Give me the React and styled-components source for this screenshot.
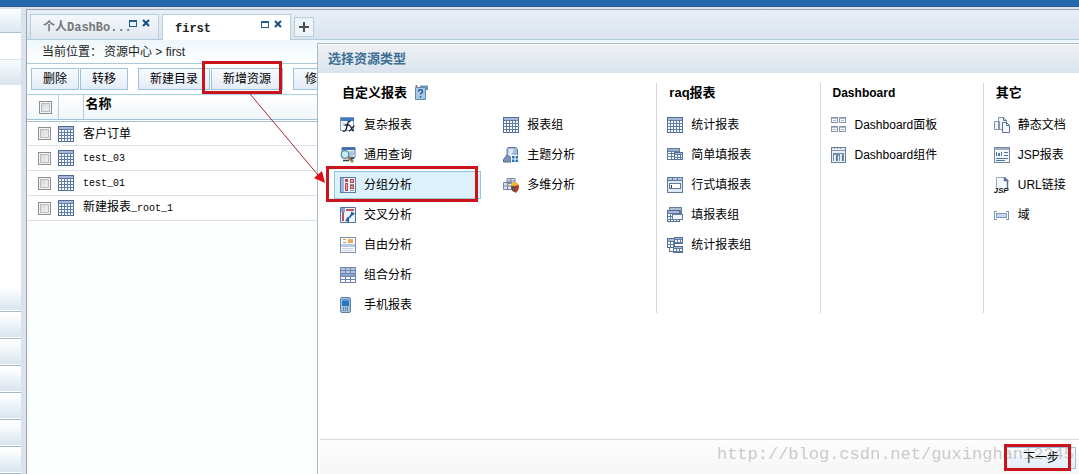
import { useState } from 'react';
import styled, { createGlobalStyle, css } from 'styled-components';

const GlobalStyle = createGlobalStyle`
  * {
    box-sizing: border-box;
  }

  body {
    margin: 0;
    overflow: hidden;
    background: #dae3ed;
    color: #000;
    font-family: 'Liberation Sans', Arial, 'Noto Sans CJK SC', sans-serif;
    font-size: 12px;
    line-height: 16px;
  }

  button {
    font: inherit;
    color: inherit;
    cursor: pointer;
  }
`;

const Page = styled.div`
  position: relative;
  display: flex;
  flex-direction: column;
  height: 100vh;
  overflow: hidden;
`;

const TopBar = styled.header`
  flex: none;
  height: 7px;
  background: #2567ad;
  border-bottom: 1px solid #2b5d97;
`;

const Shell = styled.div`
  flex: 1;
  display: flex;
  gap: 5px;
  min-height: 0;
  padding-top: 2px;
`;

const Sidebar = styled.aside`
  flex: none;
  display: flex;
  flex-direction: column;
  width: 21px;
  background: #fff;
`;

const SideTitle = styled.div`
  height: 24px;
  border-bottom: 1px solid #a4c3d6;
  background: linear-gradient(#fbfdfe, #dde8f0);
`;

const SideSearch = styled.div`
  height: 27px;
  border-bottom: 1px solid #dbe2e8;
`;

const SideGroup = styled.div`
  height: 25px;
  background: linear-gradient(#f8fbfd, #dae5ee);
`;

const SideSpace = styled.div`
  flex: 1;
`;

const SideItem = styled.div`
  flex: none;
  height: 27px;
  border-bottom: 1px solid #a2bccb;
  background: linear-gradient(#fff 10%, #e8f0f6 60%, #d9e3ed);
  box-shadow: inset 0 -1px #fff;
`;

const Main = styled.main`
  flex: 1;
  display: flex;
  flex-direction: column;
  min-width: 0;
  border-top: 1px solid #9fa6b0;
  border-left: 1px solid #9fa6b0;
  background: #fcfefe;
`;

const TabStrip = styled.div`
  flex: none;
  display: flex;
  align-items: flex-end;
  gap: 3px;
  height: 30px;
  padding: 0 3px;
  border-bottom: 1px solid #b1cbd8;
  background: linear-gradient(#e9eef5, #dae4ee);
`;

const Tab = styled.div`
  display: flex;
  align-items: center;
  justify-content: space-between;
  width: 129px;
  height: 25px;
  padding: 2px 8px 0 12px;
  border: 1px solid #b5cfe0;
  border-bottom: none;
  background: linear-gradient(#f5f8fb, #dfe8f1);
  color: #777;
  font-family: 'Liberation Mono', 'Noto Sans CJK SC', monospace;
  font-weight: bold;
  white-space: nowrap;

  ${({ $active }) =>
    $active &&
    css`
      height: 26px;
      margin-bottom: -1px;
      background: #fff;
      color: #222;
    `}
`;

const TabTools = styled.span`
  display: flex;
  gap: 5px;
  margin-left: -4px;
  padding-bottom: 10px;
`;

const IconButton = styled.button`
  display: flex;
  padding: 0;
  border: none;
  background: none;
`;

const AddTab = styled.button`
  display: flex;
  align-items: center;
  justify-content: center;
  width: 20px;
  height: 20px;
  margin-bottom: 2px;
  padding: 0;
  border: 1px solid #b5cfe0;
  background: #eef3f8;
`;

const Breadcrumb = styled.nav`
  flex: none;
  display: flex;
  align-items: center;
  gap: 2px;
  height: 24px;
  padding-left: 15px;
  border-bottom: 1px solid #a9c8dd;
  background: linear-gradient(#eef7fc, #fff);
  color: #222;
`;

const Toolbar = styled.div`
  flex: none;
  display: flex;
  align-items: center;
  gap: 10px;
  height: 30px;
  padding: 0 4px;
  background: #fff;
`;

const ButtonGroup = styled.div`
  display: flex;
  gap: 1px;
`;

const Button = styled.button`
  height: 22px;
  padding: 0 11px;
  border: 1px solid #9cc3de;
  background: linear-gradient(#f8fbfe, #e3ecf7);
  line-height: 20px;
  white-space: nowrap;
`;

const Table = styled.table`
  width: 100%;
  border-collapse: collapse;
  background: #fff;
`;

const HeadCell = styled.th`
  height: 26px;
  padding: 0 0 6px 2px;
  border: 1px solid #b0cfe2;
  border-bottom: 3px double #9fc1d9;
  border-left-width: ${({ $first }) => ($first ? 0 : '1px')};
  background: linear-gradient(#fff, #eff6f9);
  font-size: 13px;
  text-align: left;
`;

const CheckHead = styled(HeadCell)`
  width: 31px;
  padding: 0 0 0 12px;
`;

const IconHead = styled(HeadCell)`
  width: 25px;
`;

const Cell = styled.td`
  height: 25px;
  padding: 0;
  border-bottom: 1px solid #dce1e5;

  svg,
  input {
    display: block;
  }
`;

const CheckCell = styled(Cell)`
  padding-left: 11px;
`;

const Latin = styled.span`
  font-family: 'Liberation Mono', monospace;
  font-size: 10px;
`;

const Checkbox = styled.input.attrs({ type: 'checkbox' })`
  display: block;
  appearance: none;
  width: 13px;
  height: 13px;
  margin: 0;
  border: 1px solid #8e8f8f;
  background: linear-gradient(135deg, #cdd1d6, #f8f8f8);
  box-shadow: inset 0 0 0 1px #f4f4f4, inset 0 0 0 2px #b9bdc2;

  &:checked {
    background: #4a79ad;
  }
`;

const Dialog = styled.section`
  position: absolute;
  top: 43px;
  right: 0;
  bottom: 0;
  left: 317px;
  display: flex;
  flex-direction: column;
  border-top: 1px solid #a9bfd0;
  border-left: 1px solid #a9b9c9;
  background: #fff;
`;

const DialogTitle = styled.h2`
  flex: none;
  margin: 1px 0 0;
  padding: 6px 10px;
  background: linear-gradient(#edf0f3, #dae4ee);
  color: #3c6e95;
  font-size: 13px;
  line-height: 16px;
`;

const DialogBody = styled.div`
  flex: 1;
  display: grid;
  grid-template-columns: 2fr 1fr 1fr minmax(96px, 0.59fr);
  align-items: start;
  min-height: 0;
  padding: 10px 0 0 12px;
`;

const Column = styled.section`
  height: 230px;
  padding-left: 4px;

  & + & {
    border-left: 1px solid #d3d8dc;
  }
`;

const ColumnTitle = styled.h3`
  display: flex;
  align-items: center;
  gap: 8px;
  height: 20px;
  margin: 0 0 8px;
  padding-left: 8px;
  font-size: ${({ $latin }) => ($latin ? 12 : 13)}px;
  white-space: nowrap;
`;

const Lists = styled.div`
  display: grid;
  grid-template-columns: repeat(${({ $count }) => $count}, 1fr);
  gap: 4px;
`;

const List = styled.ul`
  display: flex;
  flex-direction: column;
  gap: 2px;
  margin: 0;
  padding: 0;
  list-style: none;
`;

const Option = styled.button`
  display: flex;
  align-items: center;
  gap: 8px;
  width: 100%;
  max-width: 147px;
  height: 28px;
  padding: 0 5px;
  border: 1px solid ${({ $selected }) => ($selected ? '#9cc3d8' : 'transparent')};
  background: ${({ $selected }) => ($selected ? '#dbf1fc' : 'none')};
  white-space: nowrap;

  svg {
    flex: none;
  }
`;

const DialogFooter = styled.footer`
  flex: none;
  display: flex;
  justify-content: flex-end;
  margin-left: 2px;
  padding: 7px 3px 5px;
  border-top: 1px solid #d3dbe2;
  background: linear-gradient(#fdfdfd, #f6f6f6);
`;

const NextButton = styled(Button)`
  padding: 0 16px;
`;

const Watermark = styled.div`
  position: absolute;
  right: 5px;
  bottom: 8px;
  color: rgba(110, 110, 110, 0.36);
  font-family: 'Liberation Mono', monospace;
  font-size: 17px;
  line-height: 22px;
  pointer-events: none;
`;

const Mark = styled.div`
  position: absolute;
  border: 3px solid #c8141a;
  pointer-events: none;
`;

const ButtonMark = styled(Mark)`
  top: 61px;
  left: 202px;
  width: 80px;
  height: 33px;
`;

const OptionMark = styled(Mark)`
  top: 166px;
  left: 326px;
  width: 152px;
  height: 36px;
`;

const NextMark = styled(Mark)`
  right: 8px;
  bottom: 3px;
  width: 67px;
  height: 27px;
`;

const Arrow = styled.svg`
  position: absolute;
  top: 94px;
  left: 249px;
  pointer-events: none;
`;

const Glyph = ({ children, smooth }) => (
  <svg
    width="16"
    height="16"
    viewBox="0 0 16 16"
    fill="none"
    shapeRendering={smooth ? 'auto' : 'crispEdges'}
    aria-hidden="true"
  >
    {children}
  </svg>
);

const Grid = ({ x = 0, y = 0, w = 16, h = 16, head = 3 }) => {
  const lines = [];
  for (let i = x + 3; i < x + w - 1; i += 3) lines.push(`M${i} ${y + head}h1v${h - head}h-1z`);
  for (let i = y + head; i < y + h - 1; i += 3) lines.push(`M${x} ${i}h${w}v1h-${w}z`);
  return (
    <>
      <rect x={x} y={y} width={w} height={h} fill="#4d6c96" />
      <rect x={x + 1} y={y + 1} width={w - 2} height={h - 2} fill="#fff" />
      <rect x={x + 1} y={y + 1} width={w - 2} height={head - 1} fill="#a9b8d8" />
      <path d={lines.join('')} fill="#5b7ba9" />
    </>
  );
};

const icons = {
  table: (
    <Glyph>
      <Grid />
    </Glyph>
  ),
  formula: (
    <Glyph smooth>
      <rect x=".5" y=".5" width="13" height="13" fill="#f7fbff" stroke="#7c9cc6" />
      <path d="M1 1h13v3H1z" fill="#3e77c2" />
      <path d="M2 6h3M2 8h2" stroke="#a8c0e0" />
      <path d="M10.5 4.5C8 3.8 7.6 6 7 9s-1.200 6-4 5.200M4.500 8h5M9.500 9c2-.8 1.500 5 4.500 4.800M14.500 9c-2 0-3.500 5-5.500 5" stroke="#151c28" strokeWidth="1.300" />
    </Glyph>
  ),
  query: (
    <Glyph smooth>
      <path d="M2 .5h13v10H2z" fill="#f5f9ff" stroke="#5276a8" />
      <path d="M2 1h13v2H2z" fill="#3e70ae" />
      <path d="M9 5h5M9 7h5M9 9h4" stroke="#6e91be" />
      <circle cx="5" cy="7.500" r="3.800" fill="#c6edf2" stroke="#528b9b" strokeWidth="1.300" />
      <path d="m8 10 5 5" stroke="#a77a45" strokeWidth="2.500" />
      <path d="M3 13.500h6M11 12l3-1" stroke="#26435e" strokeWidth="1.500" />
    </Glyph>
  ),
  group: (
    <Glyph>
      <path d="M0 0h16v16H0z" fill="#5c7ba5" />
      <path d="M1 1h14v14H1z" fill="#eaf1fa" />
      <path d="M1 1h3v14H1z" fill="#9db6dc" />
      <path d="M5 2h3v3H5zm0 4h3v8H5zM10 2h4v4h-4zm0 6h4v4h-4z" fill="#b64a4c" />
      <path d="M6 7h1v6H6zm5-4h2v2h-2zm0 6h2v2h-2z" fill="#e7a5a2" />
      <path d="M10 7h4v1h-4zm0 6h4v1h-4z" fill="#7c95bd" />
    </Glyph>
  ),
  cross: (
    <Glyph smooth>
      <path d="M.5.5h15v15H.5z" fill="#edf4fc" stroke="#5474a0" />
      <path d="M1 1h4v4H1z" fill="#83a2ce" />
      <path d="M2 5h2v9H2z" fill="#bd5555" />
      <path d="M6 3h8" stroke="#bd5555" strokeWidth="2" />
      <path d="M7 13c0-3 2-2 3-3s0-3 3-3" stroke="#295f9d" strokeWidth="1.600" />
      <path d="m11 4.500 4 2-4 3zM9 11l-4 2.500 4 2z" fill="#295f9d" />
    </Glyph>
  ),
  free: (
    <Glyph>
      <path d="M0 0h16v16H0z" fill="#7c90aa" />
      <path d="M1 1h14v14H1z" fill="#fafcff" />
      <path d="M8 2h5v4H8z" fill="#e6b052" />
      <path d="M3 2h3v1H3zm0 3h3v1H3z" fill="#d69e45" />
      <path d="M1 7h14v3H1z" fill="#b5caea" />
      <path d="M2 11h11v1H2zm0 2h11v1H2z" fill="#c6d0de" />
    </Glyph>
  ),
  combine: (
    <Glyph>
      <path d="M0 0h16v16H0z" fill="#6a86b0" />
      <path d="M1 1h4v2H1zm5 0h4v2H6zm5 0h4v2h-4zM1 4h4v2H1zm5 0h4v2H6zm5 0h4v2h-4z" fill="#b6c6e1" />
      <path d="M1 7h14v2H1z" fill="#86a5d3" />
      <path d="M1 10h4v2H1zm5 0h4v2H6zm5 0h4v2h-4zM1 13h4v2H1zm5 0h4v2H6zm5 0h4v2h-4z" fill="#fff" />
    </Glyph>
  ),
  phone: (
    <Glyph smooth>
      <rect x=".5" y=".5" width="10" height="15" rx="1.500" fill="#a4c0dd" stroke="#5b7fa9" />
      <path d="M2 2h7v7H2z" fill="#2976bf" />
      <path d="M2 2h7v2H2z" fill="#5b9ed7" />
      <path d="M3 11h1m1 0h1m1 0h1M3 13h1m1 0h1m1 0h1" stroke="#31547f" strokeWidth="1.200" />
    </Glyph>
  ),
  topic: (
    <Glyph smooth>
      <path d="M5 .5h8l1.500 2v8H4V2z" fill="#a8bddd" stroke="#56759f" />
      <path d="M6 2h5L8 9H5z" fill="#dce7f5" />
      <path d="M4 8 .5 12.500V15H8v-4z" fill="#7995bf" stroke="#4c6992" />
      <path d="M8 8h8v8H8z" fill="#f5faff" />
      <path d="M9 9h2.500v2.500H9zm3.500 0H15v2.500h-2.500zM9 12.500h2.500V15H9zm3.500 0H15V15h-2.500z" fill="#3073ae" />
    </Glyph>
  ),
  cube: (
    <Glyph smooth>
      <path d="M4 1.500h8v5H4zM.5 5.500h8v7h-8z" fill="#e1e6ee" stroke="#7385a5" />
      <path d="M.5 9h8M4.500 5.500v7M8 1.500v4M4 4h8" stroke="#7385a5" />
      <path d="M8 7c3-4 8-1 8 2s-2 6-4 6-4-2-4-8z" fill="#edb634" />
      <path d="m12 9 4-1c0 4-1 7-4 8z" fill="#b63a30" />
      <path d="M8 9h4v6c-3 0-4-3-4-6z" fill="#5a534f" />
    </Glyph>
  ),
  simpleForm: (
    <Glyph>
      <path d="M0 1h13v12H0z" fill="#627d9f" />
      <path d="M1 5h3v1H1zm4 0h3v1H5zM1 7h3v2H1zm4 0h3v2H5zm-4 3h3v2H1zm4 0h3v2H5z" fill="#fff" />
      <path d="M1 2h11v2H1z" fill="#9eafc8" />
      <Grid x={7} y={5} w={9} h={8} head={2} />
    </Glyph>
  ),
  rowForm: (
    <Glyph>
      <path d="M0 0h16v16H0z" fill="#617b9c" />
      <path d="M1 1h4v2H1zm5 0h4v2H6zm5 0h4v2h-4z" fill="#b5c4dc" />
      <path d="M1 4h14v11H1z" fill="#dfe7f1" />
      <path d="M2 6h12v6H2z" fill="#617b9c" />
      <path d="M3 7h10v4H3z" fill="#fff" />
      <path d="M4 8h1v3H4z" fill="#243850" />
    </Glyph>
  ),
  formGroup: (
    <Glyph>
      <path d="M2 0h13v10H2z" fill="#617c9f" />
      <path d="M3 1h11v2H3z" fill="#aebdd3" />
      <Grid x={0} y={3} w={13} h={12} />
      <path d="M5 7h11v6H5z" fill="#617c9f" />
      <path d="M6 8h9v4H6z" fill="#f1f5fc" />
    </Glyph>
  ),
  reportGroup: (
    <Glyph>
      <Grid x={0} y={1} w={8} h={10} />
      <Grid x={7} y={0} w={9} h={7} head={2} />
      <Grid x={6} y={9} w={10} h={7} head={2} />
      <path d="M2 11h1v3h3v1H2z" fill="#5e7693" />
    </Glyph>
  ),
  panel: (
    <Glyph>
      {[0, 8].map((x) =>
        [0, 9].map((y) => (
          <g key={`${x}-${y}`}>
            <path d={`M${x} ${y}h7v6h-7z`} fill="#8496ac" />
            <path d={`M${x + 1} ${y + 2}h5v3h-5z`} fill="#f8faff" />
            <path d={`M${x + 1} ${y + 1}h5v1h-5zM${x + 2} ${y + 3}h3v1h-3z`} fill="#a9b8cd" />
          </g>
        )),
      )}
    </Glyph>
  ),
  widget: (
    <Glyph>
      <path d="M0 0h15v16H0z" fill="#687e99" />
      <path d="M1 1h13v14H1z" fill="#e9eff7" />
      <path d="M1 3h13v1H1zM3 1h1v1H3zm3 0h1v1H6zm3 0h1v1H9z" fill="#8496ae" />
      <path d="M2 6h11v8H2z" fill="#758eae" />
      <path d="M3 8h2v6H3zm4 1h1v5H7zm2-2h2v7H9z" fill="#e3edfa" />
      <path d="M5 9h1v5H5zm6 0h1v5h-1z" fill="#536f94" />
    </Glyph>
  ),
  docs: (
    <Glyph smooth>
      <path d="M.5 4.500h5v8h-5zM4.500.5h5l3 3v9h-8z" fill="#edf3f9" stroke="#8295ad" />
      <path d="M8.500 5.500h4l3 3v7h-7z" fill="#f8faff" stroke="#5c7595" />
      <path d="M12.500 5.500v3h3M9.500.5v3h3" stroke="#5c7595" />
    </Glyph>
  ),
  jspReport: (
    <Glyph>
      <path d="M0 0h16v16H0z" fill="#71869f" />
      <path d="M1 3h14v12H1z" fill="#f4f8fc" />
      <path d="M1 1h14v2H1z" fill="#9fb0c6" />
      <path d="M2 5h1v4H2zm2 1h2v3H4zm3-1h1v4H7zm3 0h4v1h-4zm0 3h4v1h-4zM2 11h12v1H2zm0 2h9v1H2z" fill="#4e77a5" />
    </Glyph>
  ),
  url: (
    <Glyph smooth>
      <path d="M2.500 11V.5h8l3 3V11" fill="#f6f9fd" stroke="#9baec8" />
      <path d="M10.500.5v3h3zM13.500 4v7" stroke="#577493" strokeWidth="1.500" />
      <text x="-.5" y="16" fontFamily="Liberation Sans, sans-serif" fontSize="8" fontWeight="bold" fontStyle="italic" fill="#111">
        JSP
      </text>
    </Glyph>
  ),
  domain: (
    <Glyph>
      <path d="M0 4h3v1H1v7h2v1H0zM12 4h3v9h-3v-1h2V5h-2z" fill="#7d91ad" />
      <path d="M2 6h11v5H2z" fill="#7899c6" />
      <path d="M3 7h9v3H3z" fill="#c6d7ee" />
    </Glyph>
  ),
  help: (
    <Glyph smooth>
      <path d="M5 1.500h7V5" stroke="#6b94ba" strokeWidth="2" />
      <path d="M.5 2.500h10v12H.5z" fill="#a5c8e8" stroke="#638aaf" />
      <path d="M.5 1h2" stroke="#bf6a69" strokeWidth="2" />
      <path d="M3.500 6.500c0-2.500 4-2.500 4 0C7.500 8 5.500 8 5.500 9.500M5.500 11v1.500" stroke="#234f7c" strokeWidth="1.300" />
    </Glyph>
  ),
};

const columns = [
  {
    title: '自定义报表',
    help: true,
    lists: [
      [
        ['formula', '复杂报表'],
        ['query', '通用查询'],
        ['group', '分组分析'],
        ['cross', '交叉分析'],
        ['free', '自由分析'],
        ['combine', '组合分析'],
        ['phone', '手机报表'],
      ],
      [
        ['table', '报表组'],
        ['topic', '主题分析'],
        ['cube', '多维分析'],
      ],
    ],
  },
  {
    title: 'raq报表',
    lists: [
      [
        ['table', '统计报表'],
        ['simpleForm', '简单填报表'],
        ['rowForm', '行式填报表'],
        ['formGroup', '填报表组'],
        ['reportGroup', '统计报表组'],
      ],
    ],
  },
  {
    title: 'Dashboard',
    latin: true,
    lists: [
      [
        ['panel', 'Dashboard面板'],
        ['widget', 'Dashboard组件'],
      ],
    ],
  },
  {
    title: '其它',
    lists: [
      [
        ['docs', '静态文档'],
        ['jspReport', 'JSP报表'],
        ['url', 'URL链接'],
        ['domain', '域'],
      ],
    ],
  },
];

const rows = [
  { name: '客户订单' },
  { latin: 'test_03' },
  { latin: 'test_01' },
  { name: '新建报表', latin: '_root_1' },
];

const TabActions = () => (
  <TabTools>
    <IconButton aria-label="最大化">
      <svg width="8" height="8" viewBox="0 0 8 8" shapeRendering="crispEdges">
        <path d="M0 1h8v7H0zM1 3v4h6V3z" fill="#1d6093" fillRule="evenodd" />
      </svg>
    </IconButton>
    <IconButton aria-label="关闭">
      <svg width="8" height="8" viewBox="0 0 8 8">
        <path d="m1 1 6 6M7 1 1 7" stroke="#164f7d" strokeWidth="2" />
      </svg>
    </IconButton>
  </TabTools>
);

const App = () => {
  const [selected, setSelected] = useState('分组分析');

  return (
    <Page>
      <GlobalStyle />
      <TopBar />
      <Shell>
        <Sidebar>
          <SideTitle />
          <SideSearch />
          <SideGroup />
          <SideSpace />
          {[0, 1, 2, 3, 4, 5, 6].map((n) => (
            <SideItem key={n} />
          ))}
        </Sidebar>
        <Main>
          <TabStrip>
            <Tab>
              个人DashBo...
              <TabActions />
            </Tab>
            <Tab $active>
              first
              <TabActions />
            </Tab>
            <AddTab aria-label="新建标签">
              <svg width="10" height="10" viewBox="0 0 10 10" shapeRendering="crispEdges">
                <path d="M4 0h2v4h4v2H6v4H4V6H0V4h4z" fill="#4c4f53" />
              </svg>
            </AddTab>
          </TabStrip>
          <Breadcrumb>
            <span>当前位置：</span>
            <span>资源中心 &gt; first</span>
          </Breadcrumb>
          <Toolbar>
            <ButtonGroup>
              <Button>删除</Button>
              <Button>转移</Button>
            </ButtonGroup>
            <ButtonGroup>
              <Button>新建目录</Button>
              <Button>新增资源</Button>
            </ButtonGroup>
            <Button>修改</Button>
          </Toolbar>
          <Table>
            <thead>
              <tr>
                <CheckHead $first>
                  <Checkbox aria-label="全选" />
                </CheckHead>
                <IconHead />
                <HeadCell>名称</HeadCell>
              </tr>
            </thead>
            <tbody>
              {rows.map(({ name, latin }) => (
                <tr key={`${name}${latin}`}>
                  <CheckCell>
                    <Checkbox aria-label={name || latin} />
                  </CheckCell>
                  <Cell>{icons.table}</Cell>
                  <Cell>
                    {name}
                    {latin && <Latin>{latin}</Latin>}
                  </Cell>
                </tr>
              ))}
            </tbody>
          </Table>
        </Main>
      </Shell>

      <Dialog role="dialog" aria-labelledby="dialog-title">
        <DialogTitle id="dialog-title">选择资源类型</DialogTitle>
        <DialogBody>
          {columns.map(({ title, help, latin, lists }) => (
            <Column key={title}>
              <ColumnTitle $latin={latin}>
                {title}
                {help && <IconButton aria-label="帮助">{icons.help}</IconButton>}
              </ColumnTitle>
              <Lists $count={lists.length}>
                {lists.map((items) => (
                  <List key={items[0][1]}>
                    {items.map(([icon, label]) => (
                      <li key={label}>
                        <Option
                          $selected={label === selected}
                          aria-pressed={label === selected}
                          onClick={() => setSelected(label)}
                        >
                          {icons[icon]}
                          {label}
                        </Option>
                      </li>
                    ))}
                  </List>
                ))}
              </Lists>
            </Column>
          ))}
        </DialogBody>
        <DialogFooter>
          <NextButton>下一步</NextButton>
        </DialogFooter>
      </Dialog>

      <Watermark>http://blog.csdn.net/guxinghan12345</Watermark>
      <ButtonMark />
      <OptionMark />
      <NextMark />
      <Arrow width="78" height="92" viewBox="0 0 78 92">
        <path d="m1 0 68 81" stroke="#a52a2e" />
        <path d="m76 89-11-5 8-7z" fill="#e10b12" />
      </Arrow>
    </Page>
  );
};

export default App;
